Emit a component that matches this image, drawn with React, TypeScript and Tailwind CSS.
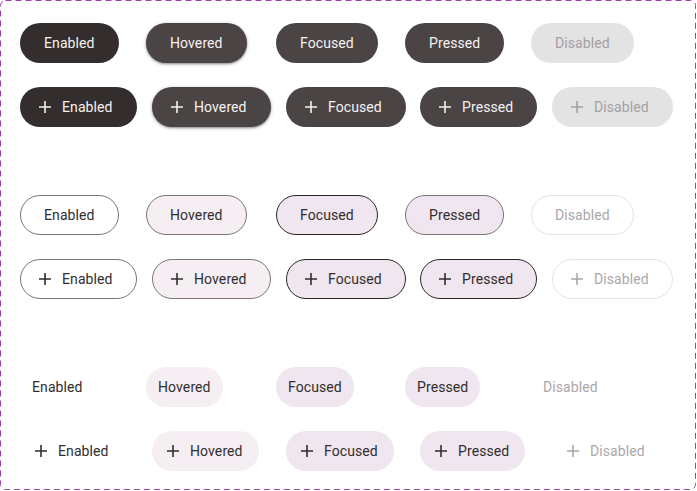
import React from "react"

type Variant = "filled" | "outlined" | "text"
type State = "Enabled" | "Hovered" | "Focused" | "Pressed" | "Disabled"

const STATES: State[] = ["Enabled", "Hovered", "Focused", "Pressed", "Disabled"]

const STYLES: Record<Variant, Record<State, string>> = {
  filled: {
    Enabled: "bg-[#332d2e] text-[#f7f2f2]",
    Hovered: "bg-[#4a4445] text-[#f7f2f2] shadow-[0_1px_3px_1px_rgba(0,0,0,0.15),0_1px_2px_rgba(0,0,0,0.3)]",
    Focused: "bg-[#4a4445] text-[#f7f2f2]",
    Pressed: "bg-[#4a4445] text-[#f7f2f2]",
    Disabled: "bg-[#e3e3e3] text-[#a3a1a2]",
  },
  outlined: {
    Enabled: "bg-white border border-[#7b7579] text-[#322d2f]",
    Hovered: "bg-[#f5eff4] border border-[#7b7579] text-[#322d2f]",
    Focused: "bg-[#f0e6ef] border border-[#2b2528] text-[#322d2f]",
    Pressed: "bg-[#f0e6ef] border border-[#7b7579] text-[#322d2f]",
    Disabled: "bg-white border border-[#e5e2e5] text-[#aaa7aa]",
  },
  text: {
    Enabled: "text-[#322d2f]",
    Hovered: "bg-[#f5eff4] text-[#322d2f]",
    Focused: "bg-[#f0e6ef] text-[#322d2f]",
    Pressed: "bg-[#f0e6ef] text-[#322d2f]",
    Disabled: "text-[#aaa7aa]",
  },
}

const PAD: Record<Variant, { plain: string; icon: string }> = {
  filled: { plain: "px-6", icon: "pl-4 pr-6" },
  outlined: { plain: "px-[23px]", icon: "pl-[15px] pr-[23px]" },
  text: { plain: "px-3", icon: "pl-3 pr-4" },
}

function PlusIcon() {
  return (
    <svg width="18" height="18" viewBox="0 0 18 18" className="shrink-0">
      <path d="M9 3v12M3 9h12" stroke="currentColor" strokeWidth="1.6" fill="none" />
    </svg>
  )
}

function Btn({ variant, state, icon }: { variant: Variant; state: State; icon?: boolean }) {
  // outlined + icon row: pressed keeps the dark outline too
  let cls = STYLES[variant][state]
  if (variant === "outlined" && icon && state === "Pressed") {
    cls = "bg-[#f0e6ef] border border-[#2b2528] text-[#322d2f]"
  }
  return (
    <button
      className={`h-10 inline-flex items-center gap-2 rounded-full box-border text-[14px] tracking-[0.1px] leading-5 ${
        icon ? PAD[variant].icon : PAD[variant].plain
      } ${cls}`}
    >
      {icon && <PlusIcon />}
      <span>{state}</span>
    </button>
  )
}

function Row({ variant, icon }: { variant: Variant; icon?: boolean }) {
  return (
    <div
      className={`grid items-center ${
        icon ? "grid-cols-[132px_134px_134px_132px_auto]" : "grid-cols-[126px_130px_129px_126px_auto]"
      }`}
    >
      {STATES.map((s) => (
        <div key={s}>
          <Btn variant={variant} state={s} icon={icon} />
        </div>
      ))}
    </div>
  )
}

export default function App() {
  return (
    <div className="w-[697px] h-[491px] bg-white" style={{ fontFamily: "Roboto, 'Liberation Sans', sans-serif" }}>
      <div className="relative w-[696px] h-[490px] box-border rounded-[5px] pt-[23px] pl-5 flex flex-col gap-[68px]">
        {/* dashed component-set frame */}
        <svg className="absolute inset-0 pointer-events-none" width="696" height="490">
          <rect
            x="0.5"
            y="0.5"
            width="695"
            height="489"
            rx="5"
            fill="none"
            stroke="#9b3fab"
            strokeWidth="1"
            strokeDasharray="6 4"
          />
        </svg>
        {(["filled", "outlined", "text"] as Variant[]).map((v) => (
          <div key={v} className="flex flex-col gap-6">
            <Row variant={v} />
            <Row variant={v} icon />
          </div>
        ))}
      </div>
    </div>
  )
}
